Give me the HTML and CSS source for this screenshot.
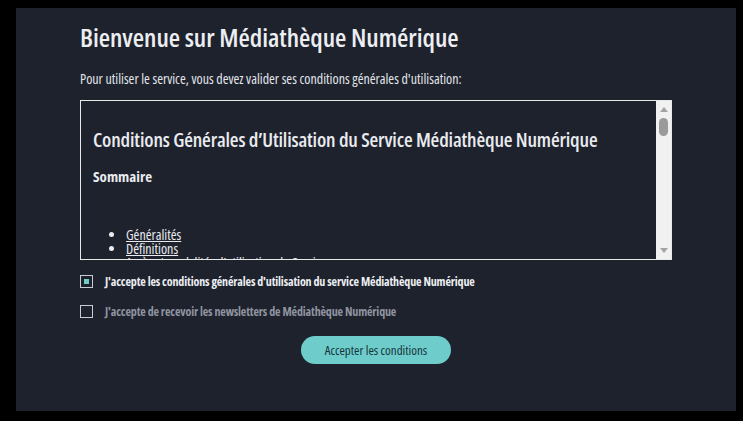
FILE: index.html
```html
<!DOCTYPE html>
<html lang="fr">
<head>
<meta charset="utf-8">
<title>Médiathèque Numérique</title>
<link rel="stylesheet" href="styles.css">
</head>
<body>
<main class="panel">
  <h1 class="title">Bienvenue sur Médiathèque Numérique</h1>
  <p class="intro">Pour utiliser le service, vous devez valider ses conditions générales d'utilisation:</p>
  <div class="terms">
    <div class="terms-content">
      <h2 class="terms-title">Conditions Générales d’Utilisation du Service Médiathèque Numérique</h2>
      <h3 class="terms-sub">Sommaire</h3>
      <ul class="toc">
        <li><a href="#">Généralités</a></li>
        <li><a href="#">Définitions</a></li>
        <li><a href="#">Accès et modalités d'utilisation du Service</a></li>
      </ul>
    </div>
    <div class="scrollbar">
      <span class="arrow arrow-up"></span>
      <span class="thumb"></span>
      <span class="track"></span>
      <span class="arrow arrow-down"></span>
    </div>
  </div>
  <label class="check-row">
    <span class="box checked"></span>
    <span class="check-label">J'accepte les conditions générales d'utilisation du service Médiathèque Numérique</span>
  </label>
  <label class="check-row">
    <span class="box"></span>
    <span class="check-label muted">J'accepte de recevoir les newsletters de Médiathèque Numérique</span>
  </label>
  <div class="actions">
    <button class="accept" type="button">Accepter les conditions</button>
  </div>
</main>
</body>
</html>
```

FILE: styles.css
```css
html, body {
  margin: 0;
  padding: 0;
  background: #000;
}
body {
  width: 743px;
  height: 421px;
  overflow: hidden;
  font-family: "Open Sans", "Roboto Condensed", "DejaVu Sans Condensed", sans-serif;
  font-stretch: 75%;
  color: #e9ebef;
}
.panel {
  box-sizing: border-box;
  margin: 8px 0 0 16px;
  width: 720px;
  height: 403px;
  background: #1e222d;
  padding: 12px 64px 0 64px;
  display: flex;
  flex-direction: column;
}
.title {
  margin: 0;
  font-size: 26px;
  line-height: 34px;
  font-weight: 600;
  letter-spacing: -0.05px;
  color: #eceef2;
  white-space: nowrap;
}
.intro {
  margin: 16px 0 0;
  font-size: 14px;
  line-height: 18px;
  color: #e3e5ea;
  white-space: nowrap;
}
.terms {
  margin-top: 12px;
  width: 592px;
  height: 160px;
  box-sizing: border-box;
  border: 1px solid #e8e8e8;
  display: flex;
  overflow: hidden;
  flex-shrink: 0;
}
.terms-content {
  flex: 1;
  overflow: hidden;
  padding: 0 12px;
}
.terms-title {
  margin: 27px 0 0;
  font-size: 20px;
  line-height: 24px;
  font-weight: 600;
  letter-spacing: -0.16px;
  color: #e9ebef;
  white-space: nowrap;
}
.terms-sub {
  margin: 15px 0 0;
  font-size: 15px;
  line-height: 18px;
  font-weight: 700;
  color: #e9ebef;
}
.toc {
  margin: 43px 0 0;
  padding-left: 33px;
  font-size: 14px;
  line-height: 14px;
}
.toc a {
  color: #e9ebef;
  text-decoration: underline;
}
.scrollbar {
  width: 15px;
  background: #f1f1f1;
  display: flex;
  flex-direction: column;
  align-items: center;
}
.arrow {
  width: 0;
  height: 0;
  border-left: 4px solid transparent;
  border-right: 4px solid transparent;
}
.arrow-up {
  margin-top: 6px;
  border-bottom: 5px solid #a3a3a3;
}
.arrow-down {
  margin-bottom: 6px;
  border-top: 5px solid #a3a3a3;
}
.thumb {
  margin-top: 6px;
  width: 9px;
  height: 18px;
  border-radius: 5px;
  background: #9a9a9a;
}
.track {
  flex: 1;
}
.check-row {
  display: flex;
  align-items: center;
  gap: 12px;
  height: 16px;
  margin-top: 13px;
  flex-shrink: 0;
}
.check-row + .check-row {
  margin-top: 14px;
}
.box {
  box-sizing: border-box;
  width: 13px;
  height: 13px;
  border: 1px solid #c9ccd2;
  display: flex;
  align-items: center;
  justify-content: center;
}
.box.checked::after {
  content: "";
  width: 5px;
  height: 5px;
  background: #6ecdc9;
}
.check-label {
  font-size: 12px;
  font-weight: 700;
  letter-spacing: -0.14px;
  color: #eceef2;
  white-space: nowrap;
}
.check-label.muted {
  color: #9094a0;
}
.actions {
  display: flex;
  justify-content: center;
  margin-top: 17px;
}
.accept {
  width: 150px;
  height: 28px;
  border: none;
  border-radius: 14px;
  background: #6ecdca;
  color: #16333a;
  font-family: inherit;
  font-stretch: 75%;
  font-size: 13px;
  padding: 0;
}
```
